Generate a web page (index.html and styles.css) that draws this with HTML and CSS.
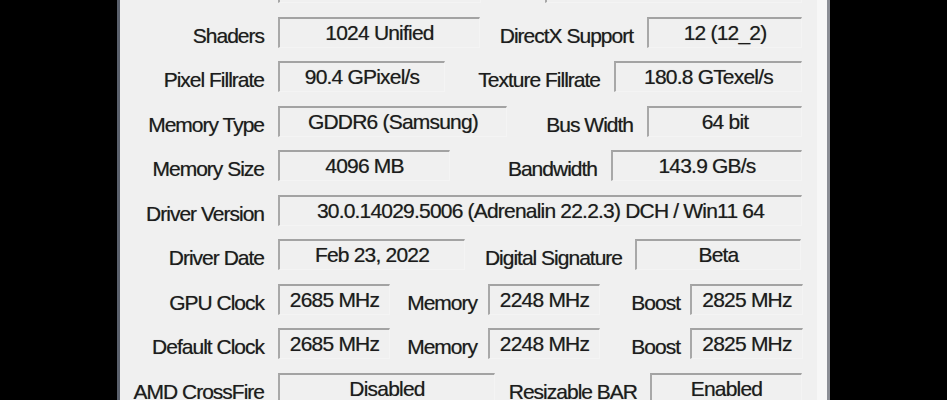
FILE: index.html
```html
<!DOCTYPE html>
<html>
<head>
<meta charset="utf-8">
<link rel="stylesheet" href="styles.css">
</head>
<body>
<div class="screen">
  <div class="panel">
    <div class="row first">
      <div class="lbl w144"></div><div class="fld f-r0a"></div>
      <div class="lbl w-r0"></div><div class="fld f-r0b"></div>
    </div>
    <div class="row">
      <div class="lbl w144">Shaders</div><div class="fld f202">1024 Unified</div>
      <div class="lbl w153">DirectX Support</div><div class="fld f155">12 (12_2)</div>
    </div>
    <div class="row">
      <div class="lbl w144">Pixel Fillrate</div><div class="fld f167">90.4 GPixel/s</div>
      <div class="lbl w155">Texture Fillrate</div><div class="fld f188">180.8 GTexel/s</div>
    </div>
    <div class="row">
      <div class="lbl w144">Memory Type</div><div class="fld f229">GDDR6 (Samsung)</div>
      <div class="lbl w126">Bus Width</div><div class="fld f155">64 bit</div>
    </div>
    <div class="row">
      <div class="lbl w144">Memory Size</div><div class="fld f172">4096 MB</div>
      <div class="lbl w147">Bandwidth</div><div class="fld f191">143.9 GB/s</div>
    </div>
    <div class="row">
      <div class="lbl w144">Driver Version</div><div class="fld f524">30.0.14029.5006 (Adrenalin 22.2.3) DCH / Win11 64</div>
    </div>
    <div class="row">
      <div class="lbl w144">Driver Date</div><div class="fld f187">Feb 23, 2022</div>
      <div class="lbl w157 g13">Digital Signature</div><div class="fld f166">Beta</div>
    </div>
    <div class="row">
      <div class="lbl w144">GPU Clock</div><div class="fld f112">2685 MHz</div>
      <div class="lbl w87 g11">Memory</div><div class="fld f112">2248 MHz</div>
      <div class="lbl w80 g10">Boost</div><div class="fld f113">2825 MHz</div>
    </div>
    <div class="row">
      <div class="lbl w144">Default Clock</div><div class="fld f112">2685 MHz</div>
      <div class="lbl w87 g11">Memory</div><div class="fld f112">2248 MHz</div>
      <div class="lbl w80 g10">Boost</div><div class="fld f113">2825 MHz</div>
    </div>
    <div class="row">
      <div class="lbl w144">AMD CrossFire</div><div class="fld f217">Disabled</div>
      <div class="lbl w142 g13">Resizable BAR</div><div class="fld f152">Enabled</div>
    </div>
  </div>
</div>
</body>
</html>
```

FILE: styles.css
```css
html, body {
  margin: 0;
  padding: 0;
  background: #000;
}
.screen {
  width: 947px;
  height: 400px;
  overflow: hidden;
  display: flex;
  background: #000;
}
.panel {
  margin-left: 117px;
  width: 707px;
  height: 400px;
  flex: none;
  border-left: 3px solid #5a606c;
  border-right: 3px solid #8c8f96;
  background: linear-gradient(to left, #f7f7f7 0, #f7f7f7 10px, #f0f0f0 10px);
  display: flex;
  flex-direction: column;
  gap: 13.5px;
  font-family: "Liberation Sans", Arial, sans-serif;
  font-size: 21px;
  letter-spacing: -0.8px;
  color: #1c1c1c;
  text-shadow: 0 0 0.7px rgba(0, 0, 0, 0.45);
}
.row {
  display: flex;
  height: 31px;
  flex: none;
}
.row.first {
  margin-top: -28px;
}
.lbl {
  flex: none;
  box-sizing: border-box;
  text-align: right;
  white-space: nowrap;
  line-height: 31px;
  padding-top: 3px;
  margin-right: 14px;
  letter-spacing: -1px;
}
.g13 { margin-right: 13px; }
.g11 { margin-right: 11px; }
.g10 { margin-right: 10px; }
.fld {
  flex: none;
  box-sizing: border-box;
  height: 31px;
  line-height: 28px;
  text-align: center;
  white-space: nowrap;
  overflow: hidden;
  border-top: 2px solid #a3a3a3;
  border-left: 2px solid #a8a8a8;
  border-right: 1px solid #f4f4f4;
  border-bottom: 1px solid #f4f4f4;
}
.w144 { width: 144px; }
.w153 { width: 153px; }
.w155 { width: 155px; }
.w126 { width: 126px; }
.w147 { width: 147px; }
.w157 { width: 157px; }
.w142 { width: 142px; }
.w87 { width: 87px; }
.w80 { width: 80px; }
.w-r0 { width: 50px; }
.f-r0a { width: 203px; }
.f-r0b { width: 257px; }
.f202 { width: 202px; }
.f155 { width: 155px; }
.f167 { width: 167px; }
.f188 { width: 188px; }
.f229 { width: 229px; }
.f172 { width: 172px; }
.f191 { width: 191px; }
.f524 { width: 524px; }
.f187 { width: 187px; }
.f166 { width: 166px; }
.f112 { width: 112px; }
.f113 { width: 113px; }
.f217 { width: 217px; }
.f152 { width: 152px; }
```
